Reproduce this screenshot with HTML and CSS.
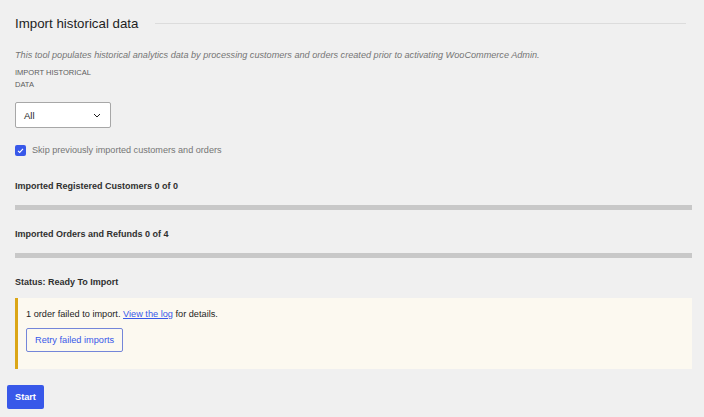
FILE: index.html
```html
<!DOCTYPE html>
<html lang="en">
<head>
<meta charset="utf-8">
<title>Import historical data</title>
<link rel="stylesheet" href="styles.css">
</head>
<body>
<main class="page">
  <section class="tool">
    <header class="tool-head">
      <h2 class="tool-title">Import historical data</h2>
      <span class="tool-rule"></span>
    </header>
    <p class="tool-desc">This tool populates historical analytics data by processing customers and orders created prior to activating WooCommerce Admin.</p>
    <div class="field">
      <label class="field-label" for="period">Import historical data</label>
      <div class="select" id="period">
        <span class="select-value">All</span>
        <svg class="select-chevron" width="8" height="5" viewBox="0 0 8 5" aria-hidden="true"><path d="M1 1l3 3 3-3" fill="none" stroke="#1e1e1e" stroke-width="1"/></svg>
      </div>
    </div>
    <label class="check">
      <span class="check-box"><svg width="9" height="9" viewBox="0 0 9 9" aria-hidden="true"><path d="M2 4.8l1.7 1.6L7 2.8" fill="none" stroke="#fff" stroke-width="1.1"/></svg></span>
      <span class="check-label">Skip previously imported customers and orders</span>
    </label>
    <div class="progress progress-first">
      <h3 class="progress-title">Imported Registered Customers 0 of 0</h3>
      <div class="progress-bar"></div>
    </div>
    <div class="progress">
      <h3 class="progress-title">Imported Orders and Refunds 0 of 4</h3>
      <div class="progress-bar"></div>
    </div>
    <h3 class="status">Status: Ready To Import</h3>
    <div class="notice">
      <p class="notice-text">1 order failed to import. <a href="#" class="notice-link">View the log</a> for details.</p>
      <button class="btn-secondary" type="button">Retry failed imports</button>
    </div>
  </section>
  <button class="btn-primary" type="button">Start</button>
</main>
</body>
</html>
```
FILE: styles.css
```css
html, body {
  margin: 0;
  padding: 0;
  background: #f0f0f0;
}
body {
  font-family: "Liberation Sans", Arial, sans-serif;
  color: #1e1e1e;
  width: 704px;
  height: 417px;
  overflow: hidden;
}
.page {
  padding: 0 12px 0 7px;
}
.tool {
  margin-left: 8px;
}
.tool-head {
  display: flex;
  align-items: center;
  gap: 17px;
  padding-top: 14px;
  height: 20px;
}
.tool-title {
  margin: 0;
  font-size: 13.3px;
  line-height: 20px;
  font-weight: 400;
  color: #1e1e1e;
  white-space: nowrap;
}
.tool-rule {
  flex: 1;
  height: 1px;
  background: #dcdcdc;
  margin-right: 6px;
  margin-top: -1px;
}
.tool-desc {
  margin: 14px 0 0;
  font-size: 9.15px;
  line-height: 14px;
  font-style: italic;
  color: #757575;
}
.field {
  margin-top: 5px;
}
.field-label {
  display: block;
  width: 82px;
  font-size: 7.5px;
  line-height: 12px;
  text-transform: uppercase;
  color: #5c5c5c;
}
.select {
  box-sizing: border-box;
  margin-top: 11px;
  width: 96px;
  height: 26px;
  background: #fff;
  border: 1px solid #a7a7a7;
  border-radius: 2px;
  display: flex;
  align-items: center;
  justify-content: space-between;
  padding: 0 9px 0 8px;
}
.select-value {
  font-size: 9.5px;
  color: #1e1e1e;
}
.select-chevron {
  display: block;
}
.check {
  margin-top: 16px;
  height: 12px;
  display: flex;
  align-items: center;
  gap: 6px;
}
.check-box {
  width: 11px;
  height: 11px;
  border-radius: 2px;
  background: #3858e9;
  display: flex;
  align-items: center;
  justify-content: center;
}
.check-box svg {
  display: block;
}
.check-label {
  font-size: 9.1px;
  line-height: 12px;
  color: #757575;
}
.progress-title,
.status {
  margin: 0;
  font-size: 9px;
  line-height: 12px;
  font-weight: 700;
  color: #2f2f2f;
}
.progress-title {
  margin-top: 18px;
}
.progress-first .progress-title {
  margin-top: 24px;
}
.progress-bar {
  margin-top: 13px;
  height: 5px;
  background: #c8c8c8;
}
.status {
  margin-top: 18px;
}
.notice {
  margin-top: 10px;
  background: #fcf9f0;
  border-left: 3px solid #dba617;
  padding: 10px 8px 17px;
}
.notice-text {
  margin: 0;
  font-size: 9.2px;
  line-height: 12px;
  color: #1e1e1e;
}
.notice-link {
  color: #3858e9;
  text-decoration: underline;
}
.btn-secondary {
  display: block;
  box-sizing: border-box;
  margin-top: 8px;
  height: 24px;
  padding: 0 8px;
  background: transparent;
  border: 1px solid #7486d9;
  border-radius: 2px;
  font-family: "Liberation Sans", Arial, sans-serif;
  font-size: 9.2px;
  color: #3858e9;
}
.btn-primary {
  display: block;
  box-sizing: border-box;
  margin-top: 16px;
  height: 24px;
  padding: 0 8px;
  background: #3858e9;
  border: 0;
  border-radius: 2px;
  font-family: "Liberation Sans", Arial, sans-serif;
  font-size: 9.2px;
  font-weight: 700;
  color: #fff;
}
```
